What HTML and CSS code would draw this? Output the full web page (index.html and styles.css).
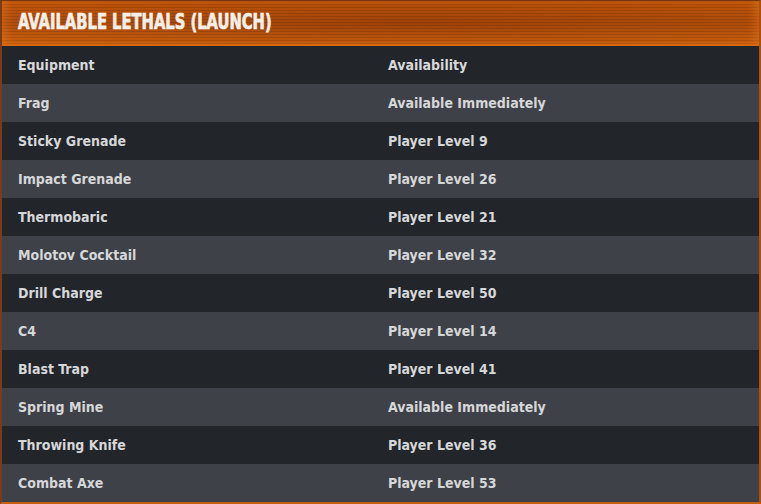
FILE: index.html
```
<!DOCTYPE html>
<html>
<head>
<meta charset="utf-8">
<link rel="stylesheet" href="styles.css">
</head>
<body>
<div class="panel">
  <div class="title"><span class="title-text">AVAILABLE LETHALS (LAUNCH)</span></div>
  <table class="grid">
    <thead>
      <tr><th>Equipment</th><th>Availability</th></tr>
    </thead>
    <tbody>
      <tr><td>Frag</td><td>Available Immediately</td></tr>
      <tr><td>Sticky Grenade</td><td>Player Level 9</td></tr>
      <tr><td>Impact Grenade</td><td>Player Level 26</td></tr>
      <tr><td>Thermobaric</td><td>Player Level 21</td></tr>
      <tr><td>Molotov Cocktail</td><td>Player Level 32</td></tr>
      <tr><td>Drill Charge</td><td>Player Level 50</td></tr>
      <tr><td>C4</td><td>Player Level 14</td></tr>
      <tr><td>Blast Trap</td><td>Player Level 41</td></tr>
      <tr><td>Spring Mine</td><td>Available Immediately</td></tr>
      <tr><td>Throwing Knife</td><td>Player Level 36</td></tr>
      <tr><td>Combat Axe</td><td>Player Level 53</td></tr>
    </tbody>
  </table>
</div>
</body>
</html>
```
FILE: styles.css
```
* { box-sizing: border-box; }
html, body { margin: 0; padding: 0; background: #1b1d20; }
.panel {
  width: 761px;
  height: 504px;
  border: 2px solid #c2600f;
  border-top: 1px solid #7a3510;
  border-left: 2px solid #7c3a18;
  border-right: 2px solid #a8520f;
  background: #222529;
  overflow: hidden;
}
.title {
  height: 45px;
  padding: 0 0 4px 16px;
  display: flex;
  align-items: center;
  font-family: "DejaVu Sans Condensed", "DejaVu Sans", sans-serif;
  font-weight: bold;
  font-size: 21px;
  color: #f6efe8;
  background:
    repeating-linear-gradient(180deg, rgba(0,0,0,0.12) 0 1px, rgba(0,0,0,0) 1px 3px),
    radial-gradient(ellipse 70% 60% at 55% 50%, rgba(110,35,0,0.35), rgba(110,35,0,0) 100%),
    linear-gradient(180deg, #c0560c 0%, #b8520c 50%, #c9600f 90%, #d86a12 100%);
  box-shadow: inset 0 -2px 0 #d66812, inset 8px 0 10px -4px rgba(230,120,30,0.5), inset -8px 0 10px -4px rgba(230,120,30,0.5);
}
.title-text {
  display: inline-block;
  white-space: nowrap;
  transform: scaleX(0.78);
  transform-origin: left center;
  -webkit-text-stroke: 0.7px #f6efe8;
}
.grid {
  width: 100%;
  border-collapse: collapse;
  font-family: "DejaVu Sans Condensed", "DejaVu Sans", sans-serif;
  font-size: 14px;
  color: #d6d7d9;
}
.grid th, .grid td {
  height: 38px;
  padding: 0 0 0 16px;
  text-align: left;
  vertical-align: middle;
}
.grid th {
  font-weight: bold;
  color: #d8d9db;
  background: #222529;
}
.grid th:first-child, .grid td:first-child { width: 370px; }
.grid td { font-weight: 600; }
.grid tbody tr:nth-child(odd) td { background: #3e4147; }
.grid tbody tr:nth-child(even) td { background: #222529; }
```
